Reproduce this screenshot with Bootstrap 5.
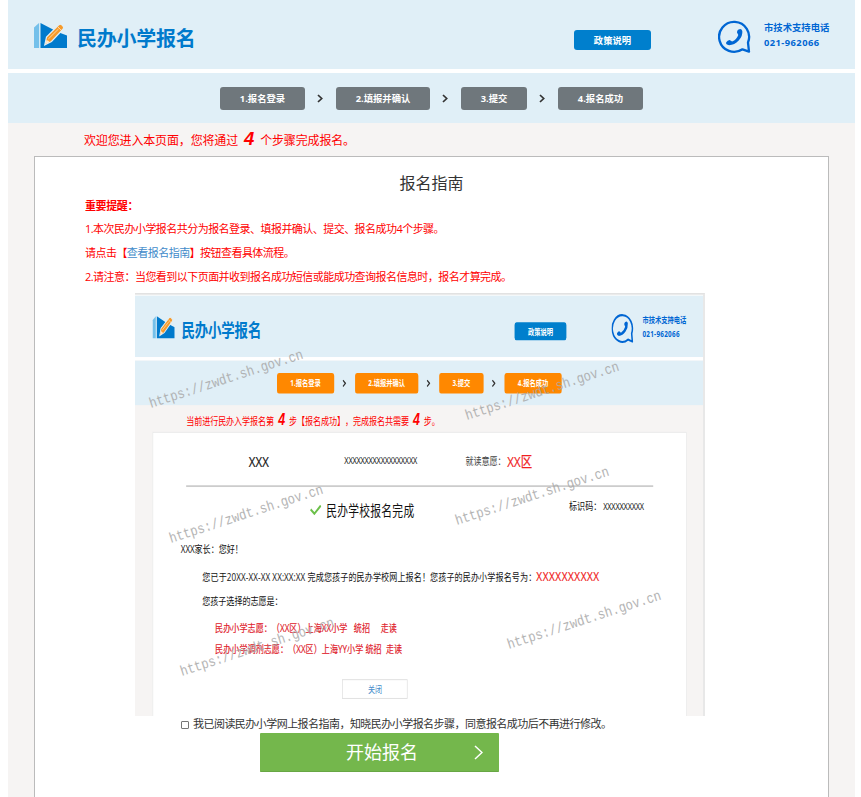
<!DOCTYPE html>
<html lang="zh-CN">
<head>
<meta charset="utf-8">
<meta name="viewport" content="width=device-width, initial-scale=1">
<title>民办小学报名</title>
<link href="https://cdn.jsdelivr.net/npm/bootstrap@5.3.0/dist/css/bootstrap.min.css" rel="stylesheet">
<style>
body{font-family:"Open Sans","Noto Sans CJK SC",sans-serif;font-size:12px;color:#333;width:861px;height:797px;overflow:hidden;background:#fff;text-spacing-trim:space-all}
.page-wrap{width:847px;height:797px;margin-left:8px;background:#f6f4f3}
.site-head{height:69px;background:#e0eff7;padding-left:26px;padding-top:19px}
.brand-icon{width:33px;height:26px;margin-top:3px}
.brand-name{font-size:20px;font-weight:700;color:#007acc;letter-spacing:-.25px;line-height:28px;margin:6px 0 0 10px;width:497px}
.policy-btn{width:77px;height:20px;border-radius:3px;background:#007fcd;color:#fff;font-size:9.33px;font-weight:700;line-height:21px;padding:0;margin-top:11px;border:0}
.phone-icon{width:33px;height:34px;margin:1px 0 0 67px}
.phone-text{font-size:9.33px;font-weight:700;color:#0066d3;line-height:14.6px;margin:2px 0 0 13px;white-space:nowrap}
.phone-num{letter-spacing:.45px}
.step-bar{height:50px;background:#e0eff7;padding-left:212px;padding-top:14px}
.white-gap{height:4px;background:#fff}
.step{height:23px;border-radius:3px;background:#6f777c;color:#fff;font-size:9.33px;font-weight:700;line-height:24px;text-align:center}
.w-a{width:85px}.w-b{width:94px}.w-c{width:66px}
.step-arrow{width:31px;padding-right:1px}
.step-arrow svg{width:6px;height:9px;margin-top:-1px}
.notice{height:33px;line-height:35px;padding-left:76px;color:#f00;font-size:12px;letter-spacing:-.15px;white-space:nowrap}
.notice em{font:italic 700 18.5px/1 "Liberation Sans",sans-serif;margin:0 3px 0 6px}
.guide-box{width:795px;height:641px;margin-left:26px;border:1px solid #bbb;border-bottom:0;background:#fff;position:relative}
.guide-title{font-size:16px;line-height:24px;padding-top:14px;margin:0;font-weight:400}
.tips{padding:0 0 0 50px;font-size:11px;letter-spacing:-.54px;color:#f00;white-space:nowrap}
.tips p{margin:0;line-height:24px}
.tips p:first-child{line-height:22px;letter-spacing:-.38px}
.tips a{color:#428bca}
.preview{width:571px;height:423px;margin-left:99px;padding-left:1px;overflow:hidden;margin-top:4px}
.preview-inner{width:847px;height:476px;background:#f6f4f3;transform:scale(.673,.89);transform-origin:0 0;border-top:2px solid #e2e2e2;border-right:3px solid #e8e8e8}
.preview-inner .step{background:#ff8800}
.preview-inner .step-bar{padding-left:211px}
.preview-inner .white-gap.thin{height:1px}
.preview-inner .policy-btn{margin-left:-2px}
.preview-inner .notice{height:31px;line-height:36px;letter-spacing:-.12px}
.done-card{width:794px;height:330px;margin-left:26px;margin-top:-1px;border:1px solid #e6e6e6;background:#fff;color:#111;font-size:12px;letter-spacing:-.08px;white-space:nowrap}
.info-row{height:60px;padding-left:142px;padding-top:3px}
.big-x{font-size:17px;letter-spacing:.2px;-webkit-text-stroke:.25px currentColor}
.big-x.region{color:#f02020}
.id-x{font-size:11px;letter-spacing:-.36px;margin-left:112px;width:180px}
.want{color:#444;width:62px}
.rule{height:2px;background:#ccc;width:694px;margin-left:49px;margin-top:-1px}
.done-row{height:51px;padding-left:233px}
.done-title{font-size:16px;letter-spacing:.4px;margin-left:7px;width:361px}
.code-row{margin-top:-8px}
.code-x{font-size:11px;letter-spacing:-.3px;margin-left:3px}
.done-card p{margin:0;line-height:24px}
.line-dear{padding:7px 0 0 41px}
.line-done{padding:8px 0 0 73px;letter-spacing:.14px}
.line-pick{padding:2px 0 0 73px}
.reg-no{font-size:15px;letter-spacing:.75px;color:#f02020;line-height:1;-webkit-text-stroke:.25px currentColor}
.red-lines{color:#e0202a;padding:7px 0 0 92px;-webkit-text-stroke:.2px currentColor;letter-spacing:.05px}
.done-card .red-lines p{line-height:23px}
.close-btn{width:97px;height:22px;border:1px solid #ddd;color:#428bca;font-size:10.5px;line-height:20px;text-align:center;margin:23px 0 0 281px}
.wm{position:absolute;width:186px;margin-left:-95px;margin-top:-10px;text-align:center;font:14.5px/20px "Liberation Mono",monospace;color:#a8a8a8;opacity:.85;transform:rotate(-18deg) scaleX(.84);white-space:nowrap}
.agree{margin:0 0 0 146px;height:17px;font-size:11px;letter-spacing:-.54px;white-space:nowrap}
.agree input{width:8px;height:8px;margin:0 4px 0 0;border:1px solid #777;border-radius:1px;appearance:none;background:#fff}
.start-btn{width:239px;height:39px;margin-left:225px;background:#74b74c;border-bottom:1px solid #68a744;border-radius:1px;color:#fff;font-size:18px;padding:0 16px 0 86px}
</style>
</head>
<body>
<svg width="0" height="0" class="position-absolute">
<symbol id="logo" viewBox="0 0 33 26"><path d="M0 5.500 5 1v25H0z" fill="#74c0ea"/><path d="M5 1h1.300v25H5z" fill="#d3eaf6"/><path d="M6.500 1 19 7.500 22 12l3-1.500 8 3V26H6.500z" fill="#007acc"/><path d="M10.800 22.800 12.500 15 24.500 3q1.800-1.700 3.800.2 2.300 2 .9 3.800L17.500 19.500z" fill="#f79a2a" stroke="#e0eff7" stroke-width="1.200"/><path d="m23.800 4.800 4 4M14.300 17 24.500 7" stroke="#fff0d8" stroke-width=".7" fill="none"/><path d="m11.600 22 .8-4q2.300.2 3.200 2.300z" fill="#ffe9cc"/></symbol>
<symbol id="phone" viewBox="0 0 33 34"><path d="M24.500 29.300A15 15 0 1 1 30 22.500L31 31.600z" fill="none" stroke="#0066d3" stroke-width="2.300" stroke-linejoin="round"/><path d="M20.500 9.500q3-1.500 3.800 1.500.6 5-3.600 9.500t-9.600 4.700q-3.500-.4-3-2.600 1.400-2.600 3.500-2.600l2.500 1.600q4.500-2 6.200-6.600l-1.300-2.500q-.2-2 1.500-3z" fill="#0066d3"/></symbol>
<symbol id="arrow" viewBox="0 0 6 9"><path d="m1 1 3.700 3.500L1 8" fill="none" stroke="#333" stroke-width="1.700"/></symbol>
</svg>
<div class="page-wrap">
  <header class="site-head d-flex align-items-start">
    <svg class="brand-icon flex-shrink-0"><use href="#logo"/></svg>
    <div class="brand-name flex-shrink-0">民办小学报名</div>
    <button class="policy-btn btn flex-shrink-0">政策说明</button>
    <svg class="phone-icon flex-shrink-0"><use href="#phone"/></svg>
    <div class="phone-text"><div>市技术支持电话</div><div class="phone-num">021-962066</div></div>
  </header>
  <div class="white-gap"></div>
  <nav class="step-bar d-flex align-items-start">
    <div class="step w-a">1.报名登录</div><div class="step-arrow d-flex justify-content-center pt-2"><svg><use href="#arrow"/></svg></div>
    <div class="step w-b">2.填报并确认</div><div class="step-arrow d-flex justify-content-center pt-2"><svg><use href="#arrow"/></svg></div>
    <div class="step w-c">3.提交</div><div class="step-arrow d-flex justify-content-center pt-2"><svg><use href="#arrow"/></svg></div>
    <div class="step w-a">4.报名成功</div>
  </nav>
  <div class="notice">欢迎您进入本页面，您将通过<em>4</em> 个步骤完成报名。</div>
  <main class="guide-box">
    <h1 class="guide-title text-center">报名指南</h1>
    <div class="tips">
      <p class="fw-bold">重要提醒：</p>
      <p>1.本次民办小学报名共分为报名登录、填报并确认、提交、报名成功4个步骤。</p>
      <p>请点击【<a href="#" class="text-decoration-none">查看报名指南</a>】按钮查看具体流程。</p>
      <p>2.请注意：当您看到以下页面并收到报名成功短信或能成功查询报名信息时，报名才算完成。</p>
    </div>
    <div class="preview">
      <div class="preview-inner">
        <div class="white-gap thin"></div>
        <div class="site-head d-flex align-items-start">
          <svg class="brand-icon flex-shrink-0"><use href="#logo"/></svg>
          <div class="brand-name flex-shrink-0">民办小学报名</div>
          <div class="policy-btn flex-shrink-0 text-center">政策说明</div>
          <svg class="phone-icon flex-shrink-0"><use href="#phone"/></svg>
          <div class="phone-text"><div>市技术支持电话</div><div class="phone-num">021-962066</div></div>
        </div>
        <div class="white-gap"></div>
        <div class="step-bar d-flex align-items-start">
          <div class="step w-a">1.报名登录</div><div class="step-arrow d-flex justify-content-center pt-2"><svg><use href="#arrow"/></svg></div>
          <div class="step w-b">2.填报并确认</div><div class="step-arrow d-flex justify-content-center pt-2"><svg><use href="#arrow"/></svg></div>
          <div class="step w-c">3.提交</div><div class="step-arrow d-flex justify-content-center pt-2"><svg><use href="#arrow"/></svg></div>
          <div class="step w-a">4.报名成功</div>
        </div>
        <div class="notice">当前进行民办入学报名第<em>4</em> 步【报名成功】，完成报名共需要<em>4</em> 步。</div>
        <div class="done-card">
          <div class="info-row d-flex align-items-center">
            <span class="big-x">XXX</span><span class="id-x">XXXXXXXXXXXXXXXXXX</span><span class="want">就读意愿：</span><span class="big-x region">XX区</span>
          </div>
          <div class="rule"></div>
          <div class="done-row d-flex align-items-center">
            <svg width="17" height="12" viewBox="0 0 17 12"><path d="m1 5 5.500 5L16 1" fill="none" stroke="#6cc04a" stroke-width="2.600"/></svg>
            <span class="done-title">民办学校报名完成</span><span class="code-row">标识码：<span class="code-x">XXXXXXXXXX</span></span>
          </div>
          <p class="line-dear">XXX家长：您好！</p>
          <p class="line-done">您已于20XX-XX-XX XX:XX:XX 完成您孩子的民办学校网上报名！您孩子的民办小学报名号为：<span class="reg-no">XXXXXXXXXX</span></p>
          <p class="line-pick">您孩子选择的志愿是：</p>
          <div class="red-lines">
            <p>民办小学志愿：（XX区）上海XX小学&nbsp;&nbsp; 统招&nbsp;&nbsp;&nbsp;&nbsp; 走读</p>
            <p>民办小学调剂志愿：（XX区）上海YY小学 统招&nbsp; 走读</p>
          </div>
          <div class="close-btn">关闭</div>
        </div>
      </div>
    </div>
    <div class="wm" style="left:191px;top:223px">https://zwdt.sh.gov.cn</div>
    <div class="wm" style="left:507px;top:235px">https://zwdt.sh.gov.cn</div>
    <div class="wm" style="left:211px;top:358px">https://zwdt.sh.gov.cn</div>
    <div class="wm" style="left:497px;top:340px">https://zwdt.sh.gov.cn</div>
    <div class="wm" style="left:222px;top:491px">https://zwdt.sh.gov.cn</div>
    <div class="wm" style="left:549px;top:464px">https://zwdt.sh.gov.cn</div>
    <label class="agree d-flex align-items-center"><input type="checkbox">我已阅读民办小学网上报名指南，知晓民办小学报名步骤，同意报名成功后不再进行修改。</label>
    <div class="start-btn d-flex align-items-center justify-content-between"><span>开始报名</span><svg width="9" height="15" viewBox="0 0 9 15"><path d="m1 1 7 6.500L1 14" fill="none" stroke="#fff" stroke-width="1.500"/></svg></div>
  </main>
</div>
<script src="https://cdn.jsdelivr.net/npm/bootstrap@5.3.0/dist/js/bootstrap.bundle.min.js"></script>
</body>
</html>
